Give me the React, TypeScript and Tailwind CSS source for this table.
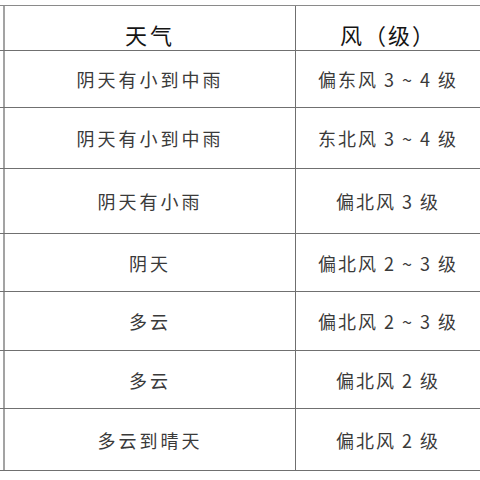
const rows = [
  { weather: "阴天有小到中雨", wind: "偏东风 3 ~ 4 级", h: "h-[57px]" },
  { weather: "阴天有小到中雨", wind: "东北风 3 ~ 4 级", h: "h-[61px]" },
  { weather: "阴天有小雨", wind: "偏北风 3 级", h: "h-[65px]" },
  { weather: "阴天", wind: "偏北风 2 ~ 3 级", h: "h-[58px]" },
  { weather: "多云", wind: "偏北风 2 ~ 3 级", h: "h-[59px]" },
  { weather: "多云", wind: "偏北风 2 级", h: "h-[58px]" },
  { weather: "多云到晴天", wind: "偏北风 2 级", h: "h-[62px]" },
];

const App = () => {
  return (
    <div className="w-[480px] h-[480px] bg-white overflow-hidden pt-[5px] font-['Noto_Sans_CJK_SC',sans-serif]">
      <div className="w-[480px] border-t border-[#8a8a8a]">
        {/* Header */}
        <div className="flex h-[45px] border-b border-[#707070]">
          <div className="ml-[3px] w-[293px] border-l-2 border-[#a3a3a3] border-r border-r-[#6f6f6f] flex items-center justify-center pt-[12px]">
            <span className="text-[22px] leading-none tracking-[3px] text-[#151515]">天气</span>
          </div>
          <div className="flex-1 flex items-center justify-center pt-[12px]">
            <span className="text-[22px] leading-none tracking-[2px] text-[#151515]">风（级）</span>
          </div>
        </div>

        {/* Rows */}
        {rows.map((r, i) => (
          <div key={i} className={`flex ${r.h} border-b border-[#707070]`}>
            <div className="ml-[3px] w-[293px] border-l-2 border-[#a3a3a3] border-r border-r-[#6f6f6f] flex items-center justify-center">
              <span className="text-[18px] leading-none tracking-[3px] text-[#3a3a3a] whitespace-nowrap">{r.weather}</span>
            </div>
            <div className="flex-1 flex items-center justify-center">
              <span className="text-[18px] leading-none tracking-[2px] text-[#3a3a3a] whitespace-nowrap">{r.wind}</span>
            </div>
          </div>
        ))}
      </div>
    </div>
  );
};

export default App;
